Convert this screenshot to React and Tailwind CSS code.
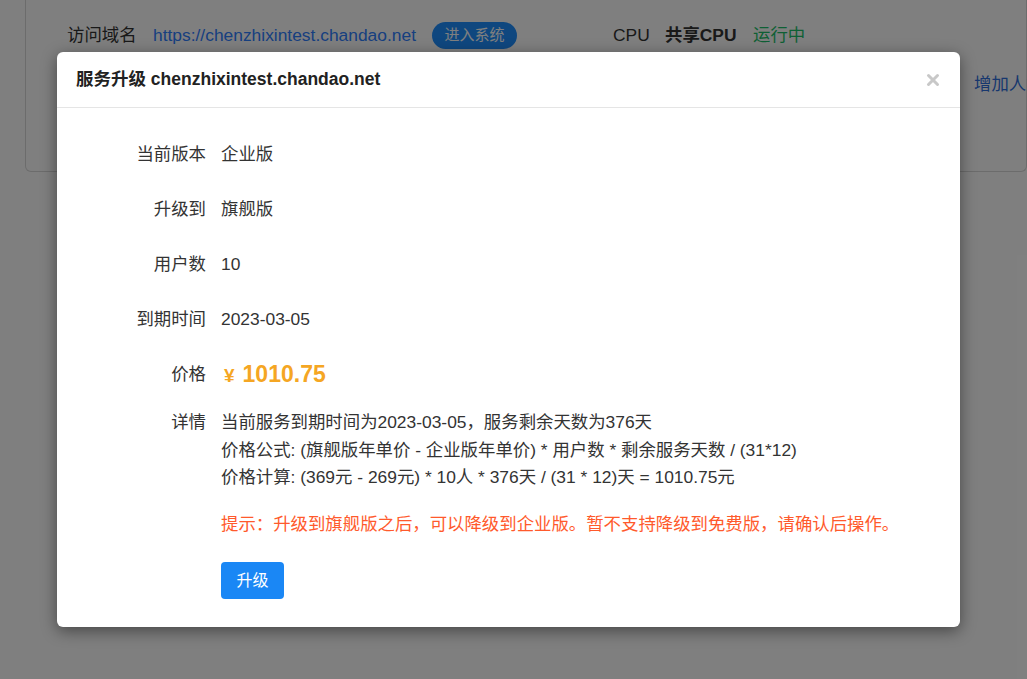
import { X } from 'lucide-react';

const font = { fontFamily: '"Liberation Sans", "Noto Sans CJK SC", sans-serif' };

const rows = [
  { label: '当前版本', value: '企业版' },
  { label: '升级到', value: '旗舰版' },
  { label: '用户数', value: '10' },
  { label: '到期时间', value: '2023-03-05' },
];

function Row({ label, children, className = 'h-[55px] items-center' }) {
  return (
    <div className={`flex ${className}`}>
      <div className="w-[164px] shrink-0 text-right text-[#333] pr-[15px]">{label}</div>
      <div className="flex-1 text-[#333]">{children}</div>
    </div>
  );
}

export default function App() {
  return (
    <div className="relative w-[1027px] h-[679px] overflow-hidden bg-white text-[17.4px]" style={font}>
      {/* page under the dialog */}
      <div className="pl-[25px]">
        <div className="h-[172px] border border-t-0 border-[#d9d9d9] rounded-b-md pl-[41px]">
          <div className="flex items-center h-[70px] text-[#333]">
            <span className="w-[86px]">访问域名</span>
            <a className="text-[#2f80ff] w-[279px] whitespace-nowrap">https://chenzhixintest.chandao.net</a>
            <span className="w-[85px] h-[27px] rounded-full bg-[#1e8fff] text-white text-[15px] flex items-center justify-center">
              进入系统
            </span>
            <span className="ml-[96px] w-[52px]">CPU</span>
            <span className="font-bold w-[88px]">共享CPU</span>
            <span className="text-[#1cc16a]">运行中</span>
          </div>
          <div className="flex items-center h-[28px] pl-[896px] text-[#2f6fdc] whitespace-nowrap">
            <span className="w-px h-[20px] bg-[#bbb] mr-[11px]" />
            增加人数
          </div>
        </div>
      </div>

      {/* overlay */}
      <div className="absolute inset-0 bg-black/50" />

      {/* dialog */}
      <div className="absolute left-[57px] top-[52px] w-[903px] h-[575px] bg-white rounded-md shadow-[0_4px_16px_rgba(0,0,0,0.45)]">
        <div className="h-[56px] flex items-center justify-between pl-[19px] pr-[18px] border-b border-[#e5e5e5]">
          <h3 className="font-bold text-[17.5px] text-[#222]">服务升级 chenzhixintest.chandao.net</h3>
          <X size={18} strokeWidth={4} className="text-[#c8c8c8]" />
        </div>

        <div className="pt-[19px]">
          {rows.map((r) => (
            <Row key={r.label} label={r.label}>{r.value}</Row>
          ))}
          <Row label="价格">
            <span className="font-bold text-[#f5a623]">
              <span className="text-[19px] ml-[3px] mr-[8px]">¥</span>
              <span className="text-[23px]">1010.75</span>
            </span>
          </Row>

          <Row label="详情" className="mt-[7px] leading-[27.5px]">
            <div>当前服务到期时间为2023-03-05，服务剩余天数为376天</div>
            <div>价格公式: (旗舰版年单价 - 企业版年单价) * 用户数 * 剩余服务天数 / (31*12)</div>
            <div>价格计算: (369元 - 269元) * 10人 * 376天 / (31 * 12)天 = 1010.75元</div>
            <div className="mt-[19px] text-[#ff5a2c]">
              提示：升级到旗舰版之后，可以降级到企业版。暂不支持降级到免费版，请确认后操作。
            </div>
            <button className="mt-[24px] w-[63px] h-[37px] rounded bg-[#1a87f5] text-white text-[16px] leading-none">
              升级
            </button>
          </Row>
        </div>
      </div>
    </div>
  );
}
